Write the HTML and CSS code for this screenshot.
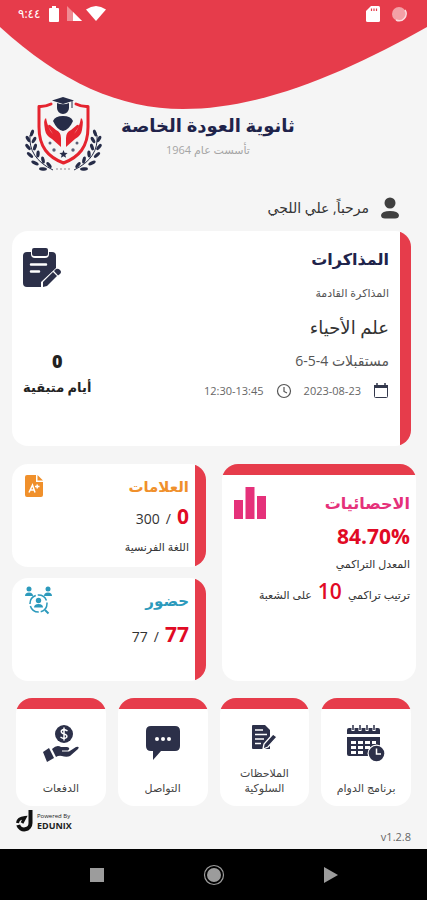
FILE: index.html
```html
<!DOCTYPE html>
<html lang="ar" dir="rtl">
<head>
    <meta charset="UTF-8">
    <meta name="viewport" content="width=device-width, initial-scale=1.0">
    <title>ثانوية العودة الخاصة</title>
    <link rel="stylesheet" href="styles.css">
</head>
<body>
    <svg class="curve" viewBox="0 0 427 109" preserveAspectRatio="none" aria-hidden="true">
        <path fill="#e63c4b" d="M0 0H427V27C350 70 265 109 183 109C120 109 60 82 0 27Z"/>
    </svg>

    <div class="status-bar">
        <div class="status-group">
            <svg width="16" height="16" viewBox="0 0 16 16"><circle cx="8" cy="8" r="7" fill="#f3a0a6"/><path d="M14 4A7 7 0 0 1 5 14" fill="none" stroke="#fbdcde" stroke-width="1.500"/></svg>
            <svg width="14" height="16" viewBox="0 0 14 16"><path d="M5 0H12.500Q14 0 14 1.500V14.500Q14 16 12.500 16H1.500Q0 16 0 14.500V5Z" fill="#fff"/><path d="M5.500 2.500V5M8 2.500V5M10.500 2.500V5" stroke="#e63c4b" stroke-width="1.200"/></svg>
        </div>
        <div class="status-group status-left">
            <svg width="20" height="15" viewBox="0 0 20 15"><path d="M0 3.500Q10-3.500 20 3.500L10 15Z" fill="#fff"/></svg>
            <svg width="15" height="15" viewBox="0 0 15 15"><path d="M0 0L15 15H0Z" fill="#f08b93"/><path d="M6 6L15 15H6Z" fill="#fff"/></svg>
            <svg class="battery" width="10" height="16" viewBox="0 0 10 16"><path d="M3 0H7V2H9Q10 2 10 3V15Q10 16 9 16H1Q0 16 0 15V3Q0 2 1 2H3Z" fill="#fff"/></svg>
            <span class="time">٩:٤٤</span>
        </div>
    </div>

    <header class="school">
        <svg width="75" height="75" viewBox="0 0 75 75" aria-hidden="true">
            <!-- shield -->
            <path d="M25 7Q19 10 13 9.500V30C13 50 22 60 37.500 66C53 60 62 50 62 30V9.500Q56 10 50 7" fill="none" stroke="#e5242f" stroke-width="3" stroke-linecap="round" stroke-linejoin="round"/>
            <!-- graduate -->
            <path d="M26 3.500L37 0L48 3.500L37 7Z" fill="#262c48"/>
            <path d="M31 6Q37 8.500 43 6V11A6 6 0 0 1 31 11Z" fill="#262c48"/>
            <path d="M46 4V11" stroke="#262c48"/>
            <path d="M27 24Q29 19 37 19T47 24Q43 33 37 34Q31 33 27 24Z" fill="#262c48"/>
            <!-- hands -->
            <path d="M35 50V41Q35 35 30 33L24 28Q21 27 23 31L27 37Q22 32 20 21Q17 22 19 33Q20 39 26 42Z" fill="#e5242f"/>
            <path d="M40 50V41Q40 35 45 33L51 28Q54 27 52 31L48 37Q53 32 55 21Q58 22 56 33Q55 39 49 42Z" fill="#e5242f"/>
            <!-- stars -->
            <path d="M37.500 53L38.600 55.800L41.600 56L39.300 57.900L40.100 60.800L37.500 59.200L34.900 60.800L35.700 57.900L33.400 56L36.400 55.800Z" fill="#262c48"/>
            <g fill="#596078"><circle cx="24" cy="46" r="1.500"/><circle cx="28" cy="53" r="1.700"/><circle cx="47" cy="53" r="1.700"/><circle cx="51" cy="46" r="1.500"/></g>
            <!-- laurel -->
            <g id="laurel" fill="#262c48">
                <path d="M4 38Q2 61 27 73" fill="none" stroke="#262c48"/>
                <ellipse cx="6" cy="36" rx="1.700" ry="3.500" transform="rotate(20 6 36)"/>
                <ellipse cx="2" cy="42" rx="1.700" ry="3.500" transform="rotate(-30 2 42)"/>
                <ellipse cx="8" cy="43" rx="1.700" ry="3.500" transform="rotate(30 8 43)"/>
                <ellipse cx="2" cy="50" rx="1.700" ry="3.700" transform="rotate(-40 2 50)"/>
                <ellipse cx="9" cy="50" rx="1.700" ry="3.500" transform="rotate(18 9 50)"/>
                <ellipse cx="4" cy="58" rx="1.700" ry="3.800" transform="rotate(-50 4 58)"/>
                <ellipse cx="12" cy="57" rx="1.700" ry="3.500" transform="rotate(4 12 57)"/>
                <ellipse cx="9" cy="66" rx="1.700" ry="4" transform="rotate(-65 9 66)"/>
                <ellipse cx="17" cy="63" rx="1.700" ry="3.500" transform="rotate(-12 17 63)"/>
                <ellipse cx="17" cy="72" rx="1.700" ry="4" transform="rotate(-85 17 72)"/>
                <ellipse cx="23" cy="68" rx="1.700" ry="3.500" transform="rotate(-40 23 68)"/>
            </g>
            <use href="#laurel" transform="translate(75 0) scale(-1 1)"/>
            <path d="M30 72H45" stroke="#c3bfc4" stroke-width="2" stroke-dasharray="2 2"/>
        </svg>
        <div class="school-name">
            <h1>ثانوية العودة الخاصة</h1>
            <p>تأسست عام 1964</p>
        </div>
    </header>

    <div class="greeting">
        <svg width="18" height="22" viewBox="0 0 18 22" fill="#3f3f3f" aria-hidden="true"><circle cx="9" cy="6" r="5.500"/><path d="M0 18Q1 14 9 14T18 18Q18 21.500 14 21.500H4Q0 21.500 0 18Z"/></svg>
        <span>مرحباً, علي اللجي</span>
    </div>

    <main>
        <section class="card exams">
            <div class="exam-info">
                <h2>المذاكرات</h2>
                <p class="small">المذاكرة القادمة</p>
                <p class="subject">علم الأحياء</p>
                <p class="topic">مستقبلات 4-5-6</p>
                <div class="when">
                    <svg width="16" height="16" viewBox="0 0 16 16" fill="none" stroke="#33384c" aria-hidden="true"><rect x="1.500" y="2.500" width="13" height="12" rx="1"/><path d="M1 3.500H15" stroke-width="3"/><path d="M4 0V3M12 0V3" stroke-width="1.500"/></svg>
                    <span>2023-08-23</span>
                    <svg width="16" height="16" viewBox="0 0 16 16" fill="none" stroke="#555" stroke-width="1.200" aria-hidden="true"><circle cx="8" cy="8" r="6.500"/><path d="M8 4V8.500L11 10"/></svg>
                    <span>12:30-13:45</span>
                </div>
            </div>
            <div class="exam-side">
                <svg width="38" height="40" viewBox="0 0 38 40" aria-hidden="true">
                    <path d="M4 4H8V6Q8 10 12 10H22Q26 10 26 6V4H29Q33 4 33 8V20L18 34V39H4Q0 39 0 35V8Q0 4 4 4Z" fill="#2c3049"/>
                    <rect x="9" y="0" width="16" height="8" rx="2" fill="#2c3049"/>
                    <path d="M8 16.500H23M8 23.500H16" stroke="#fff" stroke-width="2.500" stroke-linecap="round"/>
                    <path d="M20 34L30 24L34 28L24 38L20 39Z" fill="#2c3049"/>
                    <path d="M31 23L33 21Q35 20 37 22T37 26L35 27.500Z" fill="#2c3049"/>
                </svg>
                <div class="remaining">
                    <strong>0</strong>
                    <span>أيام متبقية</span>
                </div>
            </div>
        </section>

        <div class="panels">
            <section class="card-top stats">
                <div class="panel-head">
                    <h2>الاحصائيات</h2>
                    <svg width="34" height="34" viewBox="0 0 34 34" fill="#e5317a" aria-hidden="true"><rect x="1" y="14" width="9" height="19"/><rect x="12.500" y="1" width="9" height="32"/><rect x="24" y="10" width="9" height="23"/></svg>
                </div>
                <p class="value"><b>84.70%</b></p>
                <p class="note">المعدل التراكمي</p>
                <p class="note rank"><span>ترتيب تراكمي</span> <b>10</b> <span>على الشعبة</span></p>
            </section>

            <section class="card marks">
                <div class="panel-head">
                    <h2>العلامات</h2>
                    <svg width="18" height="22" viewBox="0 0 18 22" aria-hidden="true">
                        <path d="M2 0H11V7H18V20Q18 22 16 22H2Q0 22 0 20V2Q0 0 2 0Z" fill="#f0902b"/>
                        <path d="M12.500 0L18 5.500H12.500Z" fill="#f0902b"/>
                        <path d="M4 17.500L7.500 10L10 17.500M5 15H9.500M10 11.500H14.500M12.200 9.500V13.500" fill="none" stroke="#fff" stroke-width="1.500"/>
                    </svg>
                </div>
                <p class="value"><b>0</b> <span>/</span> <span>300</span></p>
                <p class="note">اللغة الفرنسية</p>
            </section>

            <section class="card attendance">
                <div class="panel-head">
                    <h2>حضور</h2>
                    <svg width="27" height="28" viewBox="0 0 27 28" fill="#2c9abc" aria-hidden="true">
                        <circle cx="4" cy="3" r="2.500"/><path d="M0 10Q0 6.500 4 6.500T8 10Z"/>
                        <circle cx="23" cy="3" r="2.500"/><path d="M19 10Q19 6.500 23 6.500T27 10Z"/>
                        <circle cx="13.500" cy="17.500" r="8.500" fill="none" stroke="#2c9abc" stroke-width="1.500" stroke-dasharray="11 2"/>
                        <circle cx="13.500" cy="14.500" r="2.700"/><path d="M9 21.500Q9 18 13.500 18T18 21.500Z"/>
                        <path d="M20 24L23.500 27.500" stroke="#2c9abc" stroke-width="2"/>
                    </svg>
                </div>
                <p class="value"><b>77</b> <span>/</span> <span>77</span></p>
            </section>
        </div>

        <nav class="tiles">
            <a class="card-top tile" href="#schedule">
                <svg width="38" height="37" viewBox="0 0 38 37" aria-hidden="true">
                    <path d="M2 3H31Q33 3 33 5V9H0V5Q0 3 2 3ZM0 12H33V31H2Q0 31 0 29Z" fill="#2c3049"/>
                    <g fill="none" stroke="#fff" stroke-width="3"><path d="M6 0V6M13 0V6M20 0V6M27 0V6"/></g>
                    <g stroke="#2c3049" stroke-width="1.500"><path d="M6 0V5M13 0V5M20 0V5M27 0V5"/></g>
                    <path d="M4 16H9V19H4ZM11 16H16V19H11ZM18 16H23V19H18ZM25 16H29V19H25ZM4 21H9V24H4ZM11 21H16V24H11ZM18 21H23V24H18ZM4 26H9V29H4ZM11 26H16V29H11Z" fill="#fff"/>
                    <circle cx="29.500" cy="28.500" r="9" fill="#fff"/><circle cx="29.500" cy="28.500" r="7.800" fill="#2c3049"/>
                    <path d="M29.500 23.500V29H34" fill="none" stroke="#fff" stroke-width="1.500"/>
                </svg>
                <span>برنامج الدوام</span>
            </a>
            <a class="card-top tile" href="#notes">
                <svg width="24" height="25" viewBox="0 0 24 25" aria-hidden="true">
                    <path d="M1 0H13L18 5V24H1Q0 24 0 23V1Q0 0 1 0Z" fill="#2c3049"/>
                    <path d="M3 5H11M3 9.500H15M3 14H12M3 18.500H9" stroke="#fff" stroke-width="1.300"/>
                    <path d="M11 24L12 19L21 9L25 12L16 22Z" fill="#2c3049" stroke="#fff" stroke-width="1.300"/>
                </svg>
                <span>الملاحظات السلوكية</span>
            </a>
            <a class="card-top tile" href="#contact">
                <svg width="36" height="36" viewBox="0 0 36 36" aria-hidden="true">
                    <path d="M6 1H30Q35 1 35 6V21Q35 26 30 26H16L8 35V26H6Q1 26 1 21V6Q1 1 6 1Z" fill="#2c3049"/>
                    <g fill="#fff"><circle cx="12" cy="14" r="2"/><circle cx="18" cy="14" r="2"/><circle cx="24" cy="14" r="2"/></g>
                </svg>
                <span>التواصل</span>
            </a>
            <a class="card-top tile" href="#payments">
                <svg width="36" height="37" viewBox="0 0 36 37" aria-hidden="true">
                    <circle cx="21" cy="9" r="9" fill="#2c3049"/>
                    <path d="M24.500 6Q21 3.500 18.500 5.500Q17.500 8 21 9Q25 10 23.500 12.500Q21 14.500 17.500 12M21 2.500V15.500" fill="none" stroke="#fff" stroke-width="1.500"/>
                    <path d="M0 27L6 23L11 33L4 37Z" fill="#2c3049"/>
                    <path d="M9 24Q14 19 18 22H24Q28 23 25 25.500H19V26.500H26L33 22Q37 21 35 24L27 31Q25 32 21 31.500Q16 30 13 32Z" fill="#2c3049"/>
                </svg>
                <span>الدفعات</span>
            </a>
        </nav>
    </main>

    <footer>
        <span class="version" dir="ltr">v1.2.8</span>
        <div class="powered" dir="ltr">
            <svg width="18" height="23" viewBox="0 0 18 23" fill="none" stroke="#111" aria-hidden="true"><path d="M14.500 1V14A6.300 6.300 0 0 1 2.200 16" stroke-width="4"/><path d="M1.500 14Q2 9 9 8.500L6 14" stroke-width="3"/></svg>
            <div>
                <small>Powered By</small>
                <b>EDUNIX</b>
            </div>
        </div>
    </footer>

    <div class="system-nav">
        <button type="button" aria-label="رجوع"><svg width="14" height="16" viewBox="0 0 14 16"><path d="M0 0L14 8L0 16Z" fill="#9c9c9c"/></svg></button>
        <button type="button" aria-label="الرئيسية"><svg width="22" height="22" viewBox="0 0 22 22"><circle cx="11" cy="11" r="9.500" fill="none" stroke="#9c9c9c" stroke-width="1.200"/><circle cx="11" cy="11" r="7" fill="#9c9c9c"/></svg></button>
        <button type="button" aria-label="التطبيقات الأخيرة"><svg width="14" height="14" viewBox="0 0 14 14"><rect width="14" height="14" fill="#9c9c9c"/></svg></button>
    </div>
</body>
</html>
```
FILE: styles.css
```css
* {
    box-sizing: border-box;
}
body {
    margin: 0;
    min-height: 100vh;
    display: flex;
    flex-direction: column;
    position: relative;
    background: #f5f5f5;
    color: #333;
    font-family: "Open Sans", "DejaVu Sans", sans-serif;
}
h1, h2, p {
    margin: 0;
}
svg {
    display: block;
    flex: none;
    overflow: visible;
}
.curve {
    position: absolute;
    top: 0;
    left: 0;
    width: 100%;
    height: 109px;
    z-index: -1;
}
.status-bar {
    display: flex;
    justify-content: space-between;
    height: 27px;
    padding: 0 20px 0 18px;
    color: #fff;
}
.status-group {
    display: flex;
    align-items: center;
    gap: 11px;
}
.status-left {
    gap: 4px;
}
.battery {
    margin: 0 4px;
}
.time {
    font-size: 12px;
}
.school {
    direction: ltr;
    display: flex;
    align-items: center;
    gap: 20px;
    padding: 70px 26px 0;
}
.school-name {
    direction: rtl;
    text-align: center;
}
.school h1 {
    color: #20234a;
    font-size: 18px;
    line-height: 30px;
}
.school p {
    color: #a5a5a5;
    font-size: 11px;
    line-height: 20px;
}
.greeting {
    display: flex;
    align-items: center;
    gap: 12px;
    margin-top: 24px;
    padding: 0 28px;
    font-size: 14px;
    line-height: 24px;
}

/* cards */
.card {
    background: linear-gradient(to left, #e63c4b 11px, #fff 11px);
    border-radius: 16px;
}
.card-top {
    background: linear-gradient(#e63c4b 11px, #fff 11px);
    border-radius: 16px;
}
.exams {
    display: flex;
    justify-content: space-between;
    margin: 11px 16px 0 12px;
    padding: 14px 22px 45px 11px;
}
.exam-info {
    display: flex;
    flex-direction: column;
    gap: 10px;
}
.exams h2 {
    color: #20234a;
    font-size: 16px;
    line-height: 28px;
}
.small {
    font-size: 11px;
    line-height: 20px;
    color: #555;
}
.subject {
    font-size: 18px;
    line-height: 28px;
}
.topic {
    font-size: 14px;
    line-height: 20px;
    color: #555;
}
.when {
    display: flex;
    align-items: center;
    gap: 12px;
    color: #666;
    font-size: 11px;
    line-height: 20px;
}
.exam-side {
    display: flex;
    flex-direction: column;
    justify-content: space-between;
    align-items: flex-end;
    padding-top: 3px;
}
.remaining {
    display: flex;
    flex-direction: column;
    align-items: center;
    color: #222;
    font-size: 13px;
    font-weight: bold;
    line-height: 28px;
}
.remaining strong {
    font-size: 18px;
    line-height: 24px;
}

/* statistics, marks, attendance */
.panels {
    display: grid;
    grid-template-columns: 1fr 1fr;
    grid-template-rows: 1fr 1fr;
    gap: 11px 16px;
    margin: 18px 11px 0 12px;
}
.panel-head {
    display: flex;
    justify-content: space-between;
    align-items: center;
}
.panel-head h2 {
    font-size: 15px;
    line-height: 28px;
}
.value, .rank {
    display: flex;
    align-items: baseline;
}
.value {
    gap: 6px;
    font-size: 14px;
    line-height: 32px;
}
.value b, .rank b {
    color: #e10a25;
    font-size: 21px;
}
.note {
    font-size: 11px;
    line-height: 24px;
}
.stats {
    grid-row: span 2;
    padding: 22px 6px 12px 11px;
}
.stats h2 {
    color: #e5317a;
    font-size: 16px;
}
.rank {
    gap: 6px;
    line-height: 30px;
}
.rank b {
    font-weight: 600;
}
.marks, .attendance {
    padding: 8px 17px 8px 13px;
}
.marks h2 {
    color: #f0902b;
}
.attendance h2 {
    color: #2c9abc;
}
.attendance .value {
    margin-top: 4px;
}

/* shortcuts */
.tiles {
    display: grid;
    grid-template-columns: repeat(4, 1fr);
    gap: 12px;
    margin: 17px 16px 0;
}
.tile {
    display: flex;
    flex-direction: column;
    align-items: center;
    justify-content: space-between;
    min-height: 108px;
    padding: 27px 4px 11px;
    color: #444;
    font-size: 11px;
    line-height: 15px;
    text-align: center;
    text-decoration: none;
}

footer {
    display: flex;
    justify-content: space-between;
    align-items: flex-end;
    padding: 3px 16px 4px;
    min-height: 43px;
}
.version {
    color: #666;
    font-size: 11px;
    line-height: 16px;
}
.powered {
    display: flex;
    align-items: center;
    align-self: flex-start;
    gap: 3px;
    color: #222;
}
.powered small, .powered b {
    display: block;
    font-size: 6px;
    line-height: 9px;
}
.powered b {
    font-size: 9px;
}
.system-nav {
    display: flex;
    margin-top: auto;
    padding: 0 38px;
    height: 51px;
    background: #000;
}
.system-nav button {
    flex: 1;
    display: flex;
    align-items: center;
    justify-content: center;
    border: none;
    background: none;
    cursor: pointer;
}
```
